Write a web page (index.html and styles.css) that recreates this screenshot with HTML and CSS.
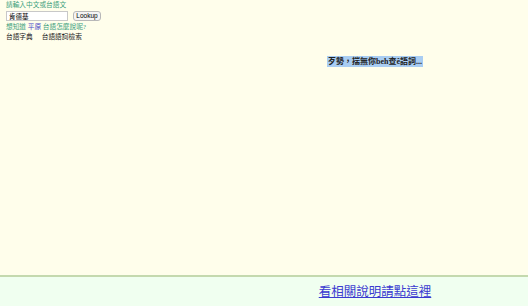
FILE: index.html
```html
<!DOCTYPE html>
<html lang="zh-Hant">
<head>
<meta charset="utf-8">
<link rel="stylesheet" href="styles.css">
</head>
<body>
<div class="main">
  <div class="left">
    <div class="prompt">請輸入中文或台語文</div>
    <form class="search">
      <input class="query" type="text" value="肯德基">
      <button class="lookup" type="button">Lookup</button>
    </form>
    <div class="ask">想知道 <span class="word">平原</span> 台語怎麼說呢?</div>
    <div class="tabs"><span>台語字典</span><span>台語語詞檢索</span></div>
  </div>
  <div class="right">
    <span class="notfound">歹勢，揣無你beh查ê語詞...</span>
  </div>
</div>
<div class="footer">
  <a class="help" href="#">看相關說明請點這裡</a>
</div>
</body>
</html>
```
FILE: styles.css
```css
html, body {
  margin: 0;
  padding: 0;
}
body {
  width: 528px;
  height: 306px;
  background: #f0fff0;
  font-family: "Liberation Serif", "Noto Sans CJK TC", serif;
  overflow: hidden;
}
.main {
  height: 275px;
  background: #fffeeb;
  display: flex;
  border-bottom: 2px solid #c4d9ae;
}
.left {
  width: 222px;
  padding: 1px 0 0 6px;
  box-sizing: border-box;
  font-size: 6.7px;
  line-height: 8px;
}
.prompt {
  color: #3c9f7c;
}
.search {
  display: flex;
  align-items: center;
  gap: 5px;
  margin: 1px 0 2px;
  height: 11px;
}
.query {
  width: 62px;
  height: 10px;
  box-sizing: border-box;
  border: 1px solid #c8c8c8;
  background: #fff;
  padding: 0 2px;
  font-size: 6.5px;
  font-family: "Noto Sans CJK TC", sans-serif;
  margin: 0;
}
.lookup {
  height: 10px;
  width: 28px;
  box-sizing: border-box;
  border: 1px solid #b8b8b8;
  border-radius: 3px;
  background: #f4f4f4;
  font-family: "Liberation Sans", sans-serif;
  font-size: 6.5px;
  padding: 0;
  margin: 0;
  line-height: 8px;
}
.ask {
  color: #3c9f7c;
  margin-top: 1px;
}
.word {
  color: #4848c8;
}
.tabs {
  display: flex;
  gap: 9px;
  margin-top: 2px;
  color: #222;
}
.right {
  flex: 1;
  display: flex;
  justify-content: center;
  align-items: flex-start;
  padding-top: 56px;
}
.notfound {
  background: #a9cdf2;
  font-weight: bold;
  font-size: 8px;
  line-height: 11px;
  color: #222;
  padding: 0 1px;
}
.footer {
  padding: 6px 0 0 222px;
  display: flex;
  justify-content: center;
}
.help {
  color: #3a3ad0;
  font-size: 12.5px;
  line-height: 18px;
  text-decoration: underline;
}
```
